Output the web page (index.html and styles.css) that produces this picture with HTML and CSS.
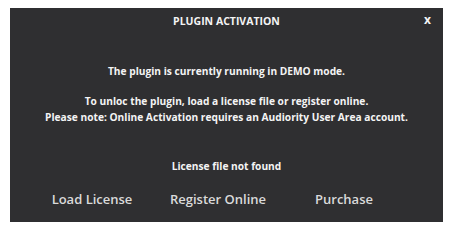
FILE: index.html
```html
<!DOCTYPE html>
<html>
<head>
<meta charset="utf-8">
<link rel="stylesheet" href="styles.css">
</head>
<body>
<div class="dialog">
  <div class="header">
    <div class="title">PLUGIN ACTIVATION</div>
    <div class="close">x</div>
  </div>
  <div class="msg msg-first">The plugin is currently running in DEMO mode.</div>
  <div class="msg msg-block">
    <div>To unloc the plugin, load a license file or register online.</div>
    <div>Please note: Online Activation requires an Audiority User Area account.</div>
  </div>
  <div class="msg status">License file not found</div>
  <div class="actions">
    <div class="btn">Load License</div>
    <div class="btn">Register Online</div>
    <div class="btn">Purchase</div>
  </div>
</div>
</body>
</html>
```
FILE: styles.css
```css
html, body {
  margin: 0;
  padding: 0;
  background: #ffffff;
}
body {
  padding: 8px 0 0 10px;
  font-family: "Open Sans", "DejaVu Sans", sans-serif;
}
.dialog {
  width: 433px;
  height: 214px;
  background: #2f2f31;
  color: #f4f4f4;
  display: flex;
  flex-direction: column;
}
.header {
  position: relative;
  padding-top: 5px;
  display: flex;
  justify-content: center;
}
.title {
  font-size: 10.5px;
  font-weight: 700;
  line-height: 16px;
}
.close {
  position: absolute;
  right: 12px;
  top: 4px;
  font-size: 12px;
  font-weight: 700;
  line-height: 16px;
}
.msg {
  text-align: center;
  font-size: 10.2px;
  font-weight: 700;
  line-height: 16px;
}
.msg-first {
  margin-top: 34px;
}
.msg-block {
  margin-top: 14px;
}
.status {
  margin-top: 33px;
}
.actions {
  display: grid;
  grid-template-columns: 126px 126px 126px;
  padding-left: 19px;
  margin-top: 16px;
}
.btn {
  text-align: center;
  font-size: 13px;
  font-weight: 600;
  color: #dadada;
  line-height: 18px;
}
```
